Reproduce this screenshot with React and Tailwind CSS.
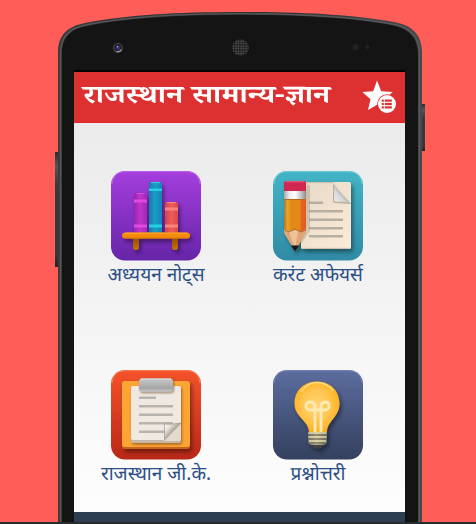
import React from "react";

function PhoneBody() {
  return (
    <svg className="absolute left-0 top-0 h-[522px] w-[476px]" viewBox="0 0 476 522" aria-hidden="true">
      <defs>
        <linearGradient id="side" x1="0" x2="1" y1="0" y2="0">
          <stop offset="0" stopColor="#3a3a3c" />
          <stop offset="0.6" stopColor="#2c2f30" />
          <stop offset="1" stopColor="#48484a" />
        </linearGradient>
        <linearGradient id="button" x1="0" x2="0" y1="0" y2="1">
          <stop offset="0" stopColor="#292b2c" />
          <stop offset="0.12" stopColor="#525657" />
          <stop offset="0.3" stopColor="#343838" />
          <stop offset="0.9" stopColor="#353838" />
          <stop offset="1" stopColor="#202223" />
        </linearGradient>
        <pattern id="grille" width="2.5" height="2.5" patternUnits="userSpaceOnUse">
          <rect width="2.5" height="2.5" fill="#202020" />
          <circle cx="1.1" cy="1.1" r="0.75" fill="#666" />
        </pattern>
      </defs>
      <rect x="55" y="152" width="5" height="115" fill="url(#button)" />
      <rect x="420" y="104" width="5" height="47" fill="url(#button)" />
      <path d="M58 522V52C58 35 68 26 85 23C125 15 175 12 240 12S354 15 394 22C412 25 422 35 422 52V522Z" fill="url(#side)" />
      <path d="M60.5 522V53C60.5 37 69 28 86 25C126 17 176 13.7 240 13.7S353 17 392 24C410 27 419.5 37 419.5 53V522" fill="none" stroke="#57575a" strokeWidth="1.3" />
      <path d="M62 522V54C62 38 70 29 87 26C127 18 177 15 240 15S353 18 391 25C409 28 418 38 418 54V522Z" fill="#141414" />
      <rect x="74" y="70" width="331" height="2" fill="#030303" />
      <circle cx="118" cy="48" r="5" fill="#454545" />
      <circle cx="118" cy="47.7" r="3.7" fill="#20202b" />
      <circle cx="118" cy="48" r="2" fill="#30308d" />
      <circle cx="117.5" cy="46.7" r="0.8" fill="#b5b5ee" />
      <path d="M116.5 51.7q3 .5 5-2" fill="none" stroke="#9a9a9a" strokeWidth="1.3" />
      <circle cx="240.5" cy="47.5" r="8.3" fill="url(#grille)" />
      <circle cx="355.5" cy="47" r="3.3" fill="#212121" />
      <circle cx="367.5" cy="47" r="2" fill="#242424" />
    </svg>
  );
}

function StarList() {
  return (
    <svg className="h-[34px] w-[35px] shrink-0" viewBox="0 0 35 34" aria-hidden="true">
      <path d="M15 .5l4.2 10.8 11.6.7-9 7.4 3 10.8L15.5 24.5 6 30l2.5-10.8L.3 12l10.9-.7Z" fill="#fff" />
      <circle cx="25" cy="24" r="9.8" fill="#dd3030" />
      <circle cx="25" cy="24" r="9" fill="#fff" />
      <g fill="#dd3030">
        <rect x="19.7" y="19.5" width="2.2" height="2.2" rx=".5" />
        <rect x="19.7" y="22.9" width="2.2" height="2.2" rx=".5" />
        <rect x="19.7" y="26.3" width="2.2" height="2.2" rx=".5" />
        <rect x="22.8" y="19.5" width="7" height="2.2" />
        <rect x="22.8" y="22.9" width="7" height="2.2" />
        <rect x="22.8" y="26.3" width="7" height="2.2" />
      </g>
    </svg>
  );
}

function Tile({ id, top, bottom, edge, children }) {
  return (
    <svg className="block size-[90px]" viewBox="0 0 90 90" aria-hidden="true">
      <defs>
        <linearGradient id={id} x1="0" x2="0" y1="0" y2="1">
          <stop offset="0" stopColor={top} />
          <stop offset="1" stopColor={bottom} />
        </linearGradient>
        <filter id={id + "-shadow"} x="-20%" y="-20%" width="150%" height="150%">
          <feDropShadow dx="2" dy="3" stdDeviation="2" floodColor="#000" floodOpacity="0.42" />
        </filter>
      </defs>
      <rect width="90" height="89.5" rx="14" fill={"url(#" + id + ")"} />
      <path d="M1 13Q2 .7 14 .7H76Q88 .7 89 13" fill="none" stroke={edge} strokeWidth="1" opacity=".6" />
      <g filter={"url(#" + id + "-shadow)"}>{children}</g>
    </svg>
  );
}

function BooksIcon() {
  return (
    <Tile id="purple" top="#a43edd" bottom="#6625a8" edge="#c583ec">
      <defs>
        <linearGradient id="pinkBook"><stop stopColor="#9c22b4" /><stop offset=".45" stopColor="#bd35cb" /><stop offset="1" stopColor="#a626ba" /></linearGradient>
        <linearGradient id="blueBook"><stop stopColor="#1479ae" /><stop offset=".45" stopColor="#209cc8" /><stop offset="1" stopColor="#1584b5" /></linearGradient>
        <linearGradient id="redBook"><stop stopColor="#d5404f" /><stop offset=".5" stopColor="#ec5f56" /><stop offset="1" stopColor="#d9464f" /></linearGradient>
        <linearGradient id="peg" x1="0" x2="0" y1="0" y2="1"><stop stopColor="#8e4a08" /><stop offset="1" stopColor="#cb7503" /></linearGradient>
      </defs>
      <path d="M22 66h6v10q0 3-3 3t-3-3ZM61 66h6v10q0 3-3 3t-3-3Z" fill="url(#peg)" />
      <path d="M23 62V25q0-3 3-3h7q3 0 3 3v37Z" fill="url(#pinkBook)" />
      <path d="M25.5 22.6h8" stroke="#d453dc" />
      <path d="M23 28.5h13v3H23ZM23 53.5h13v3H23Z" fill="#e249e0" />
      <path d="M38 62V13.5q0-2.5 2.5-2.5h8q2.5 0 2.5 2.5V62Z" fill="url(#blueBook)" />
      <path d="M38 17.5h13v2.5H38ZM38 53.5h13v3H38Z" fill="#26cfe0" />
      <path d="M40 11.6h9" stroke="#42cbdc" />
      <path d="M54 62V33.5q0-2.5 2.5-2.5h8q2.5 0 2.5 2.5V62Z" fill="url(#redBook)" />
      <path d="M56 31.6h9" stroke="#ff8b7f" />
      <path d="M54 36.5h13v3H54ZM54 53.5h13v3H54Z" fill="#fb857c" />
      <rect x="11" y="61.5" width="68" height="6" rx="3" fill="#f48b09" />
      <path d="M14 62.2h62" stroke="#ffad2d" strokeWidth="1" />
      <path d="M14 67h62" stroke="#d87103" strokeWidth=".8" />
    </Tile>
  );
}

function PencilIcon() {
  return (
    <Tile id="teal" top="#42b4c5" bottom="#308ba5" edge="#91dce3">
      <defs>
        <linearGradient id="paper" x1="0" x2="1" y1="0" y2="1"><stop stopColor="#e6d9c5" /><stop offset="1" stopColor="#fbecd9" /></linearGradient>
        <linearGradient id="wood"><stop stopColor="#ca6e15" /><stop offset=".16" stopColor="#e9a42d" /><stop offset=".32" stopColor="#e28915" /><stop offset=".72" stopColor="#e28912" /><stop offset=".78" stopColor="#e36524" /><stop offset="1" stopColor="#e05b20" /></linearGradient>
        <linearGradient id="silver"><stop stopColor="#aaa" /><stop offset=".25" stopColor="#eee" /><stop offset=".5" stopColor="#fff" /><stop offset=".75" stopColor="#ccc" /><stop offset="1" stopColor="#8c8c8c" /></linearGradient>
        <linearGradient id="fold" x1="0" x2=".65" y1="1" y2=".35"><stop stopColor="#ededed" /><stop offset=".55" stopColor="#d8d8d8" /><stop offset="1" stopColor="#8d8d8d" /></linearGradient>
      </defs>
      <path d="M30 11H76q2 0 2 2v63q0 2-2 2H30q-2 0-2-2V13q0-2 2-2Z" fill="url(#paper)" />
      <path d="M29 11.7H61M30 77.4H76" stroke="#c3b59f" strokeWidth=".8" />
      <path d="M60 13v17q0 2 3 2l15 1Z" fill="#8d8374" opacity=".55" />
      <path d="M61 13C65 20 72 26 78 32.5 73 30 66 31.5 61.5 30.5Q60.7 30 61 13Z" fill="url(#fold)" />
      <g fill="#b8aea1"><rect x="36" y="30.5" width="14" height="2.5" /><rect x="36" y="39" width="34" height="2.5" /><rect x="36" y="47.5" width="34" height="2.5" /><rect x="36" y="56" width="34" height="2.5" /><rect x="36" y="64" width="34" height="2.5" /></g>
      <path d="M34 12l3 3v45L24 79l-4-2Z" fill="#725c3b" opacity=".22" />
      <path d="M12 12q0-2 2-2h16q3 0 3 2v48L22 80 11 60Z" fill="url(#wood)" />
      <path d="M11 58l5 3 6-2 6 2 5-3v4L22 80 11 62Z" fill="#dfa679" />
      <path d="M16 61l6-2 3 1-3 17Z" fill="#f1c299" />
      <path d="M18 74.5h8L22 80.5Z" fill="#161616" />
      <path d="M11 20V12q0-2 3-2h16q3 0 3 2v8Z" fill="#d12750" />
      <path d="M13 10.7h18" stroke="#ee6285" />
      <rect x="11" y="20" width="22" height="8" fill="url(#silver)" />
      <path d="M11 28.5h22" stroke="#b7691a" />
      <path d="M11.5 59l4.5 2 6-3 6 3 5-2" fill="none" stroke="#9d6638" strokeWidth=".8" />
    </Tile>
  );
}

function ClipboardIcon() {
  return (
    <Tile id="orange" top="#f4532a" bottom="#b92717" edge="#ff9c74">
      <defs>
        <linearGradient id="clip" x1="0" x2="0" y1="0" y2="1"><stop stopColor="#c8c8c8" /><stop offset=".75" stopColor="#a5a5a5" /><stop offset="1" stopColor="#c7c7c7" /></linearGradient>
        <linearGradient id="corner" x1="0" x2=".55" y1="0" y2=".5"><stop stopColor="#fffdf8" /><stop offset=".5" stopColor="#e6e0d8" /><stop offset="1" stopColor="#a79d92" /></linearGradient>
        <filter id="pageShadow" x="-20%" y="-20%" width="140%" height="140%"><feDropShadow dx="1" dy="1.5" stdDeviation="1.3" floodColor="#6d3907" floodOpacity=".6" /></filter>
      </defs>
      <rect x="11" y="11" width="68" height="68" rx="3" fill="#c6651b" />
      <rect x="11" y="11" width="68" height="66" rx="3" fill="#fca536" />
      <g filter="url(#pageShadow)">
        <path d="M22 16H68q2 0 2 2v53q0 2-2 2H22q-2 0-2-2V18q0-2 2-2Z" fill="#c4b7a6" />
        <path d="M22 16H68q2 0 2 2v50q0 2-2 2H22q-2 0-2-2V18q0-2 2-2Z" fill="#efe9e1" />
      </g>
      <g fill="#b7b3ae"><rect x="28" y="26.5" width="17" height="2.5" /><rect x="28" y="35" width="34" height="2.5" /><rect x="28" y="43.5" width="34" height="2.5" /><rect x="28" y="52" width="34" height="2.5" /><rect x="28" y="60.5" width="26" height="2.5" /></g>
      <path d="M70 53L53 71h15q2 0 2-2Z" fill="#e4d9cc" />
      <path d="M70 53C66 53.5 59 55 53.5 54V70Z" fill="url(#corner)" />
      <path d="M53.5 54q6 1 16-1M53.5 54v16L70 53" fill="none" stroke="#9f968b" strokeWidth=".7" />
      <g filter="url(#pageShadow)"><rect x="28" y="8.5" width="34" height="13" rx="3" fill="url(#clip)" /></g>
      <path d="M30 9h30" stroke="#e2e2e2" strokeWidth="1" />
    </Tile>
  );
}

function BulbIcon() {
  return (
    <Tile id="navy" top="#5c6d9f" bottom="#34405e" edge="#8799c2">
      <defs>
        <radialGradient id="glass" cx=".48" cy=".48" r=".6"><stop stopColor="#ffd87a" /><stop offset=".5" stopColor="#ffc652" /><stop offset=".8" stopColor="#ffb62c" /><stop offset="1" stopColor="#fba00c" /></radialGradient>
        <linearGradient id="base"><stop stopColor="#77756e" /><stop offset=".45" stopColor="#bdb58e" /><stop offset="1" stopColor="#6f6d65" /></linearGradient>
      </defs>
      <path d="M36 62C36 51 21.5 47 21.5 33.5C21.5 20 31.5 11.5 44 11.5S66.5 20 66.5 33.5C66.5 47 54 51 54 62Z" fill="url(#glass)" />
      <path d="M28 22Q34 12.7 44 12.7q10 0 16 8" stroke="#ffe28c" strokeWidth="1.2" fill="none" />
      <path d="M42 62V38Q42 32 37.5 32Q33 32 33 36T38 40H51.5Q56 40 56 36T52 32Q48 32 48 38V62" fill="none" stroke="#ffe9b5" strokeWidth="2.8" />
      <path d="M35 62h19v10q0 2-4 3l-3 3h-5l-3-3q-4-1-4-3Z" fill="url(#base)" />
      <path d="M35 65h19M35 69h19M36 73h17" stroke="#6a675b" strokeWidth="1.2" />
      <path d="M35.5 63h18M35.5 67h18M36 71h17" stroke="#e3daa9" strokeWidth="1.3" />
      <path d="M38 75h13l-4 3.3h-5Z" fill="#414343" />
    </Tile>
  );
}

function MenuItem({ icon, label }) {
  return (
    <div className="flex h-[199px] w-[162px] flex-col items-center">
      {icon}
      <span className="mt-0.5 whitespace-nowrap text-[19px] leading-[28px] text-[#2c4f86]">{label}</span>
    </div>
  );
}

export default function App() {
  return (
    <main className="relative flex h-[524px] w-[476px] flex-col overflow-hidden bg-[#ff5e58] font-['Noto_Sans_Devanagari','Noto_Sans',sans-serif]">
      <PhoneBody />
      <section className="relative ml-[74px] mt-[72px] flex h-[450px] w-[331px] shrink-0 flex-col">
        <header className="flex h-[51px] shrink-0 items-center justify-between border-b border-[#e52424] bg-[#dd3030] pl-[9px] pr-2">
          <h1 className="mt-1 w-[247px] origin-left scale-x-[1.187] whitespace-nowrap font-['Noto_Serif_Devanagari','Noto_Serif',serif] text-[26px] font-bold leading-[40px] text-white">राजस्थान सामान्य-ज्ञान</h1>
          <StarList />
        </header>
        <div className="grid h-[389px] shrink-0 grid-cols-[162px_162px] content-start overflow-hidden bg-linear-to-b from-[#ebebeb] to-[#fdfdfd] pl-px pt-12">
          <MenuItem icon={<BooksIcon />} label="अध्ययन नोट्स" />
          <MenuItem icon={<PencilIcon />} label="करंट अफेयर्स" />
          <MenuItem icon={<ClipboardIcon />} label="राजस्थान जी.के." />
          <MenuItem icon={<BulbIcon />} label="प्रश्नोत्तरी" />
        </div>
        <div className="h-[10px] bg-[#2c3e50]" />
      </section>
      <div className="h-[2px] shrink-0 bg-[#2b2b2b]" />
    </main>
  );
}
